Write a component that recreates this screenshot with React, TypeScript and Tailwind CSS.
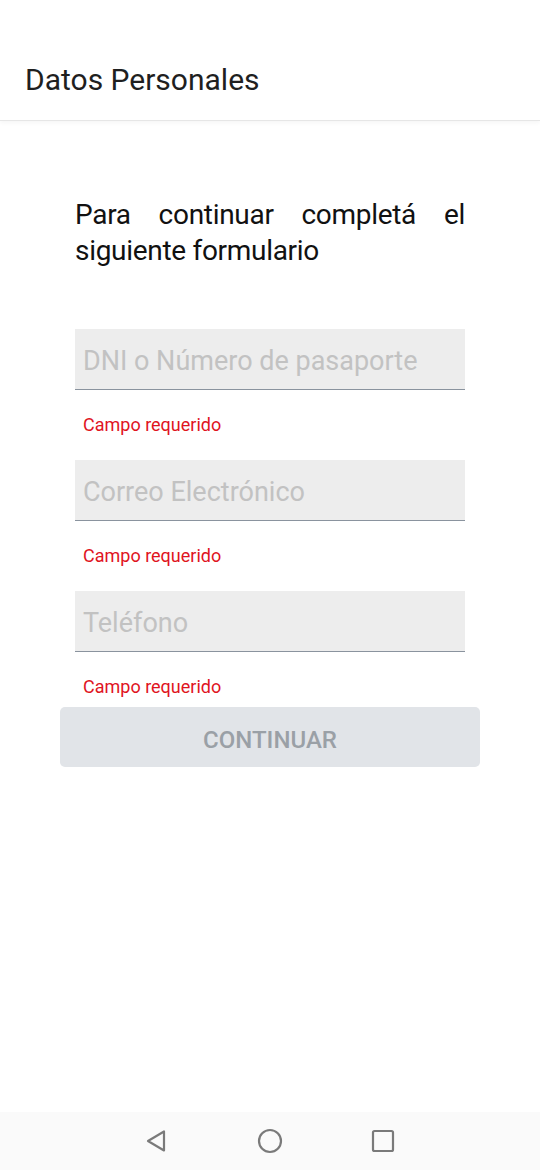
import React from 'react';

const fields = ['DNI o Número de pasaporte', 'Correo Electrónico', 'Teléfono'];

function NavBar() {
  return (
    <div className="flex h-[58px] items-center justify-center gap-[86px] bg-[#fafafa]">
      <svg width="26" height="26" viewBox="0 0 26 26" fill="none" stroke="#7a7a7a" strokeWidth="2.2" strokeLinejoin="round">
        <path d="M20 3.5 L20 22.5 L4 13 Z" />
      </svg>
      <svg width="28" height="28" viewBox="0 0 28 28" fill="none" stroke="#7a7a7a" strokeWidth="2.2">
        <circle cx="14" cy="14" r="11" />
      </svg>
      <svg width="26" height="26" viewBox="0 0 26 26" fill="none" stroke="#7a7a7a" strokeWidth="2.2">
        <rect x="3" y="3" width="20" height="20" rx="1.5" />
      </svg>
    </div>
  );
}

export default function App() {
  return (
    <div className="flex h-[1170px] w-[540px] flex-col bg-white font-['Roboto',sans-serif]">
      <header className="flex h-[121px] items-end border-b border-[#e6e6e6] px-[25px] pb-[25px] shadow-[0_2px_4px_rgba(0,0,0,0.04)]">
        <h1 className="text-[30px] leading-none text-[#1f1f1f]">Datos Personales</h1>
      </header>

      <main className="flex-1 px-[60px]">
        <p className="mt-[76px] px-[15px] text-justify text-[28px] leading-[36px] tracking-[-0.3px] text-[#111] [text-align-last:left]">
          Para continuar completá el siguiente formulario
        </p>

        <form className="mt-[60px] flex flex-col" onSubmit={(e) => e.preventDefault()}>
          <div className="flex flex-col gap-[25px] px-[15px]">
            {fields.map((f) => (
              <div key={f}>
                <input
                  placeholder={f}
                  className="h-[61px] w-full border-b border-[#8a939e] bg-[#ededed] px-[8px] pt-[3px] text-[27px] text-[#333] outline-none placeholder:text-[#c2c2c2]"
                />
                <p className="mt-[25px] px-[8px] text-[18px] leading-[20px] text-[#e0141e]">Campo requerido</p>
              </div>
            ))}
          </div>
          <button
            type="submit"
            className="mt-[10px] h-[60px] w-full rounded-[5px] bg-[#e1e4e8] pt-[5px] text-[24px] font-medium text-[#9aa0a6]"
          >
            CONTINUAR
          </button>
        </form>
      </main>

      <NavBar />
    </div>
  );
}
